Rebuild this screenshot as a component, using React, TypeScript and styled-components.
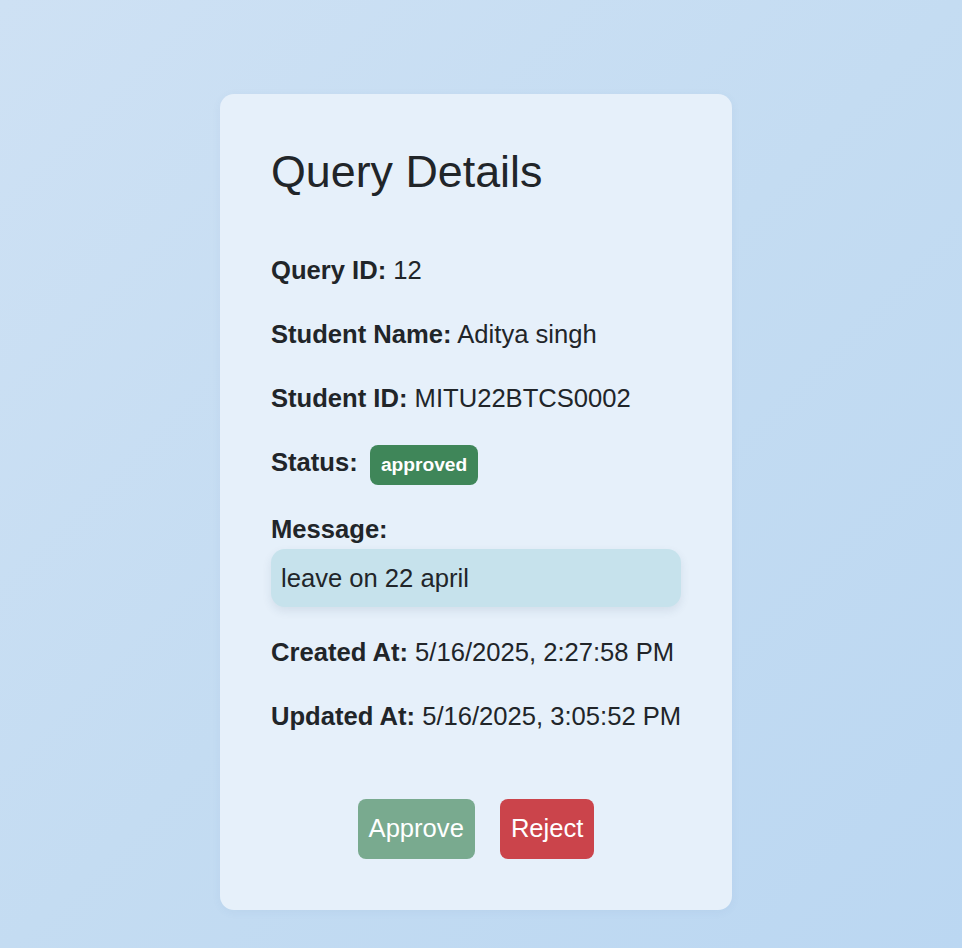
import React from "react";
import styled, { createGlobalStyle } from "styled-components";

const GlobalStyle = createGlobalStyle`
  html, body {
    margin: 0;
    padding: 0;
  }
  body {
    font-family: "Liberation Sans", Arial, sans-serif;
    color: #212529;
    line-height: 1.5;
    background: linear-gradient(135deg, #cee1f4 0%, #c4dcf2 50%, #bbd7f2 100%);
    min-height: 100vh;
  }
`;

const Page = styled.div`
  min-height: 100vh;
  box-sizing: border-box;
  display: flex;
  justify-content: center;
  align-items: flex-start;
  padding: 94px 10px 38px 0;
`;

const Card = styled.div`
  width: 512px;
  box-sizing: border-box;
  padding: 51px;
  background: #e6f0fa;
  border-radius: 14px;
  box-shadow: 0 2px 10px rgba(60, 100, 150, 0.06);
`;

const Title = styled.h2`
  margin: 0 0 52px;
  font-size: 44.8px;
  font-weight: 400;
  line-height: 1.2;
  color: #212529;
`;

const Row = styled.p<{ $tight?: boolean }>`
  margin: 0 0 ${(p) => (p.$tight ? "0" : "25.6px")};
  font-size: 25.6px;
  line-height: 1.5;
  white-space: nowrap;
`;

const Label = styled.strong`
  font-weight: 700;
`;

const Badge = styled.span`
  display: inline-block;
  margin-left: 5px;
  padding: 9px 11px;
  font-size: 19.2px;
  font-weight: 700;
  line-height: normal;
  color: #ffffff;
  background: #3f8659;
  border-radius: 8px;
`;

const MessageBox = styled.div`
  margin-bottom: 25.6px;
  padding: 10px;
  font-size: 25.6px;
  line-height: 1.5;
  background: #c6e2ec;
  border-radius: 14px;
  box-shadow: 0 4px 10px rgba(40, 70, 100, 0.1);
`;

const Actions = styled.div`
  display: flex;
  justify-content: center;
  gap: 25px;
  margin-top: 64px;
`;

const Button = styled.button<{ $variant: "approve" | "reject" }>`
  font-family: "Liberation Sans", Arial, sans-serif;
  font-size: 25.6px;
  line-height: normal;
  padding: 15.3px 11px;
  border: none;
  border-radius: 8px;
  color: #ffffff;
  background: ${(p) => (p.$variant === "approve" ? "#79aa8f" : "#cb444b")};
  cursor: pointer;
`;

export default function App() {
  return (
    <>
      <GlobalStyle />
      <Page>
        <Card>
          <Title>Query Details</Title>
          <Row>
            <Label>Query ID:</Label> 12
          </Row>
          <Row>
            <Label>Student Name:</Label> Aditya singh
          </Row>
          <Row>
            <Label>Student ID:</Label> MITU22BTCS0002
          </Row>
          <Row>
            <Label>Status:</Label> <Badge>approved</Badge>
          </Row>
          <Row $tight>
            <Label>Message:</Label>
          </Row>
          <MessageBox>leave on 22 april</MessageBox>
          <Row>
            <Label>Created At:</Label> 5/16/2025, 2:27:58 PM
          </Row>
          <Row>
            <Label>Updated At:</Label> 5/16/2025, 3:05:52 PM
          </Row>
          <Actions>
            <Button $variant="approve">Approve</Button>
            <Button $variant="reject">Reject</Button>
          </Actions>
        </Card>
      </Page>
    </>
  );
}
